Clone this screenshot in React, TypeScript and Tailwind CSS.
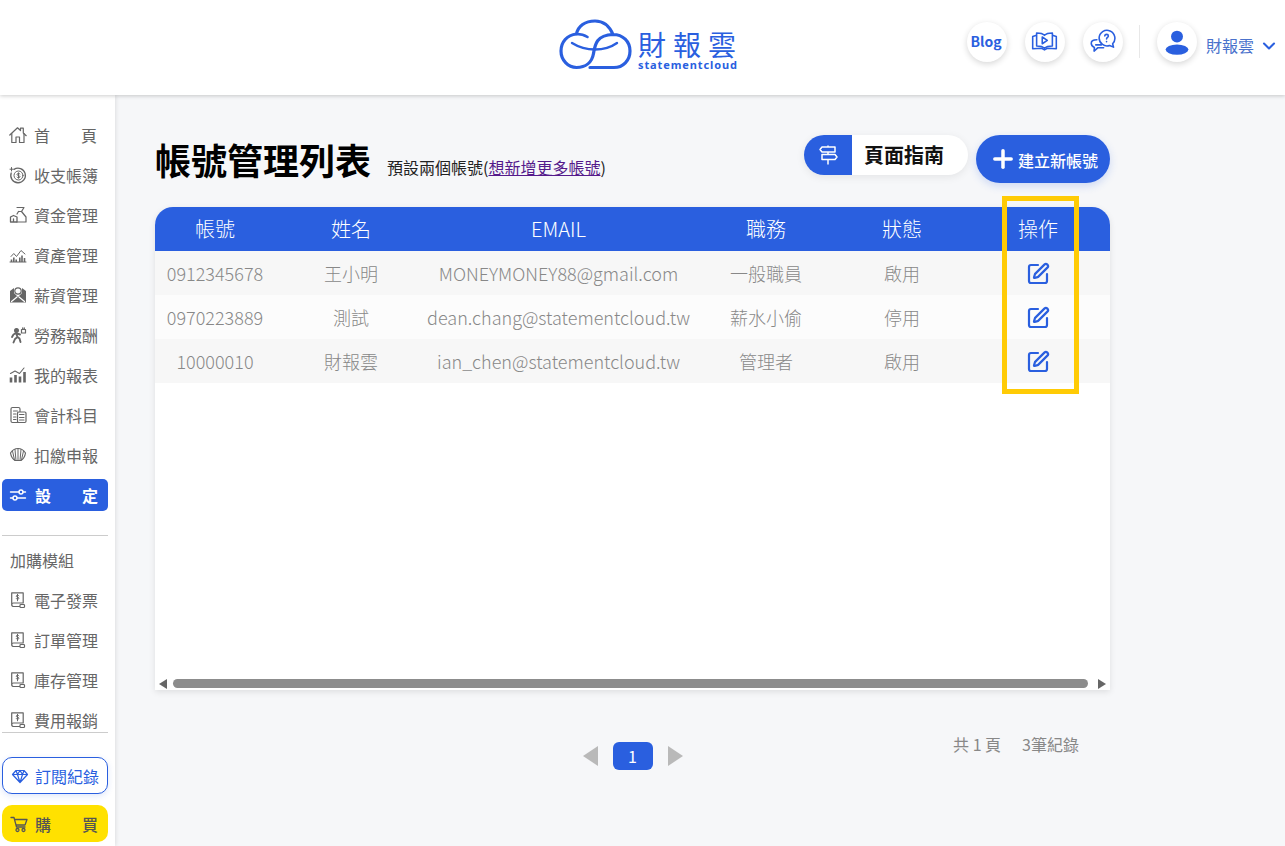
import React from 'react';
import { ChevronDown, Plus, SquarePen } from 'lucide-react';

const font = { fontFamily: '"Noto Sans CJK TC", "Noto Sans", sans-serif' };

const Ico = ({ children, cls = 'text-[#666]' }: { children: React.ReactNode; cls?: string }) => (
  <svg viewBox="0 0 18 18" className={`h-[18px] w-[18px] shrink-0 ${cls}`} fill="none" stroke="currentColor" strokeWidth="1.2" strokeLinecap="round" strokeLinejoin="round">
    {children}
  </svg>
);

const HomeIcon = () => (
  <Ico>
    <path d="M.8 9 8.500 1.800l3 2.700V2.200h2.800V7l2.900 2.700" />
    <path d="M2.800 7.500V16.500H7v-5.500h3.500v5.500H15V7.500" />
  </Ico>
);
const MoneyIcon = () => (
  <Ico>
    <path d="M5 3.400A7.300 7.300 0 1 1 2.200 7" strokeWidth="1.300" />
    <circle cx="9.500" cy="9.500" r="4.500" strokeWidth="1" />
    <path d="M11 8c-.5-.8-3-.9-3 .5s3 .8 3 2.200-2.500 1.300-3 .5M9.500 6.800v5.400M2.500 1.500v3.500M1 3.200h3" strokeWidth="1" />
  </Ico>
);
const BagIcon = () => (
  <Ico>
    <path d="M8 1.500h7l-2.500 4L17 11v5H8" />
    <path d="M9.500 5.500h3M8 8l1.500-2.500" />
    <path d="M1.500 16v-5l3-1.500L8 11v5zM4.500 16v-3" strokeWidth="1.300" />
  </Ico>
);
const AssetIcon = () => (
  <Ico>
    <path d="M1 16h16" strokeWidth="1" />
    <path d="M2.500 16v-2.500M4.800 16v-4.500M7.200 16v-2.500M10.800 16v-4.500M13 16V9.500M15.500 16v-4" strokeWidth="1.600" strokeLinecap="butt" />
    <path d="M2 10.500l2.800-3 2.700 3 4.500-6 4 3.500" strokeWidth="1" />
  </Ico>
);
const SalaryIcon = () => (
  <Ico>
    <path d="M1 5 5 2v5l4 4 4-4V2l4 3v11.500H1z" fill="currentColor" stroke="none" />
    <circle cx="9" cy="5" r="3.200" fill="#fff" stroke="currentColor" />
    <path d="M2.500 15.500l5.500-4.500M15.500 15.500l-5.500-4.500" stroke="#fff" />
  </Ico>
);
const WorkIcon = () => (
  <Ico>
    <circle cx="7.500" cy="4.500" r="1.900" fill="currentColor" />
    <path d="M7 7 4.500 8.500 3 11M7 7l1.500 4-2.500 2-1.500 3.500M8.500 11l2 1.500 1 3.500M8 7.500l3 1" strokeWidth="1.900" />
    <path d="M12.500 3.500h4v3.500h-4zM13.700 3.500V1.800M15.300 3.500V1.800" strokeWidth="1.200" />
  </Ico>
);
const ReportIcon = () => (
  <Ico>
    <path d="M2 16.500v-5M6.500 16.500V9M11 16.500v-6M15.500 16.500V6" strokeWidth="2.600" strokeLinecap="butt" />
    <path d="M1.500 7.500 6 5l4.500 2.500 4.500-5.500" strokeWidth="1.100" />
  </Ico>
);
const AccountIcon = () => (
  <Ico>
    <path d="M8.500 16.500H3.500A1.500 1.500 0 0 1 2 15V3a1.500 1.500 0 0 1 1.500-1.500h6A1.500 1.500 0 0 1 11 3v2.500" />
    <rect x="8.500" y="6" width="8.500" height="10.500" rx="1.200" />
    <path d="M4.500 5h4M4.500 8H7M4.500 11H7M4.500 13.500H7M10.500 8.500h4.500M10.500 11.500h4.500M10.500 14h4.500" strokeWidth="1.100" />
  </Ico>
);
const TaxIcon = () => (
  <Ico>
    <path d="M1.500 7c2.200-3.500 5-4.500 7.500-4.500s5.300 1 7.500 4.500c-.5 3-2.200 6-4.500 7.500H6C3.700 13 2 10 1.500 7z" />
    <path d="M6 3.500 7 14.500M9 2.500v12M12 3.500 11 14.500M3.500 5l2 9M14.500 5l-2 9" strokeWidth="1" />
  </Ico>
);
const ModuleIcon = () => (
  <Ico>
    <path d="M11 15.500H4.500A1.800 1.800 0 0 1 2.700 13.700V1.800h11.500V12H4.500a1.700 1.700 0 0 0 0 3.500" />
    <path d="M10 4.800c-.4-.8-2.800-.8-2.800.4s2.800.8 2.800 2-2.500 1.100-2.900.3M8.500 3.300v6.500" strokeWidth="1" />
    <rect x="11" y="13.500" width="4.500" height="3" rx=".8" fill="#fff" />
  </Ico>
);

const navItems = [
  { icon: <MoneyIcon />, label: '收支帳簿' },
  { icon: <BagIcon />, label: '資金管理' },
  { icon: <AssetIcon />, label: '資產管理' },
  { icon: <SalaryIcon />, label: '薪資管理' },
  { icon: <WorkIcon />, label: '勞務報酬' },
  { icon: <ReportIcon />, label: '我的報表' },
  { icon: <AccountIcon />, label: '會計科目' },
  { icon: <TaxIcon />, label: '扣繳申報' },
];

const addons = ['電子發票', '訂單管理', '庫存管理', '費用報銷'];

const rows = [
  { phone: '0912345678', name: '王小明', email: 'MONEYMONEY88@gmail.com', role: '一般職員', status: '啟用' },
  { phone: '0970223889', name: '測試', email: 'dean.chang@statementcloud.tw', role: '薪水小偷', status: '停用' },
  { phone: '10000010', name: '財報雲', email: 'ian_chen@statementcloud.tw', role: '管理者', status: '啟用' },
];

const NavRow = ({ icon, children }: { icon: React.ReactNode; children: React.ReactNode }) => (
  <div className="flex h-10 items-center gap-[7px] whitespace-nowrap pl-[9px] text-[16px] text-[#666]">
    {icon}
    {children}
  </div>
);

const Spread = ({ a, b }: { a: string; b: string }) => (
  <span className="flex w-[63px] justify-between">
    <span>{a}</span>
    <span>{b}</span>
  </span>
);

const Logo = () => (
  <div className="flex items-center gap-[6px]">
    <svg viewBox="0 0 73 52" className="mb-[5px] h-[52px] w-[73px]" fill="none" stroke="#2a5fdf" strokeWidth="3.200" strokeLinecap="round" strokeLinejoin="round">
      <path d="M31 48.500H55c9 0 16-7 16-16.500S64 15.500 54 15.500C50 6 44 2 36 2 26 2 19 7 17.500 15 8 16 2 23 2 32s7 16.500 15.500 16.500c9 0 15.500-5 17-14 1.500-9 3-18.500 19.500-19" />
      <path d="M13 24c8 5 15 6.500 23 6.500s15-1.500 22-6.500" strokeWidth="2.400" />
      <path d="M17.500 15c4 0 8 1 11 3" strokeWidth="2.600" />
    </svg>
    <div className="flex flex-col pt-[5px]">
      <span className="h-[30px] text-[28px] leading-[30px] tracking-[7px] text-[#2a5fdf]">財報雲</span>
      <span style={{ fontFamily: '"Noto Sans", sans-serif' }} className="text-[11px] font-bold leading-[12px] tracking-[0.900px] text-[#2a5fdf]">statementcloud</span>
    </div>
  </div>
);

const Round = ({ children }: { children: React.ReactNode }) => (
  <div className="flex h-10 w-10 items-center justify-center rounded-full bg-white shadow-[0_2px_6px_rgba(0,0,0,0.16)]">{children}</div>
);

export default function App() {
  return (
    <div style={font} className="flex h-[846px] w-[1285px] flex-col overflow-hidden bg-[#f6f7f9]">
      {/* header */}
      <header className="relative z-20 flex h-[95px] shrink-0 items-center bg-white pl-[559px] pr-[6px] shadow-[0_1px_4px_rgba(0,0,0,0.2)]">
        <Logo />
        <div className="ml-auto flex items-center pb-[12px]">
          <div className="flex gap-[18px]">
            <Round>
              <span className="pr-[2px] text-[14px] font-bold text-[#2a5fdf]">Blog</span>
            </Round>
            <Round>
              <svg viewBox="0 0 24 24" className="h-[27px] w-[27px]" fill="none" stroke="#2a5fdf" strokeWidth="1.400" strokeLinejoin="round">
                <path d="M5 6.500 1.500 7.500v11l8-.5 2.500 1.500 2.500-1.500 8 .5v-11l-3.500-1" />
                <path d="M5 4.500c3 0 5.500.5 7 2 1.500-1.500 4-2 7-2V16c-3 0-5.500.5-7 2-1.500-1.500-4-2-7-2z" />
                <path d="M10 8v6l4.500-3z" />
              </svg>
            </Round>
            <Round>
              <svg viewBox="0 0 24 24" className="h-[27px] w-[27px]" fill="none" stroke="#2a5fdf" strokeWidth="1.400" strokeLinejoin="round" strokeLinecap="round">
                <path d="M13 14.500H8l-3.500 3 .3-3.200C3 13.500 2 12 2 10.500 2 8.500 4 7.500 7 7.500" transform="translate(0 3)" />
                <path d="M9 9a7 7 0 1 1 12 5l.8 3-3.500-1.500A7 7 0 0 1 9 9z" />
                <path d="M14 7c.2-1.800 3.200-1.800 3.200 0 0 1.300-1.600 1.300-1.600 2.800M15.600 12v.2M6 15h5" />
              </svg>
            </Round>
          </div>
          <div className="ml-[16px] mr-[17px] h-[33px] w-px bg-[#e8e8e8]" />
          <Round>
            <svg viewBox="0 0 24 24" className="h-[26px] w-[26px]" fill="#2a5fdf">
              <circle cx="12" cy="7" r="5.500" />
              <ellipse cx="12" cy="19" rx="10.500" ry="4.800" />
            </svg>
          </Round>
          <span className="ml-[9px] pt-[7px] text-[16px] text-[#4a72cc]">財報雲</span>
          <ChevronDown className="ml-[5px] mt-[8px] h-[20px] w-[20px] text-[#2a5fdf]" strokeWidth={2.500} />
        </div>
      </header>

      <div className="flex min-h-0 flex-1">
        {/* sidebar */}
        <aside className="relative z-10 flex w-[115px] shrink-0 flex-col bg-white pt-[20px] shadow-[1px_0_4px_rgba(0,0,0,0.1)]">
          <NavRow icon={<HomeIcon />}>
            <Spread a="首" b="頁" />
          </NavRow>
          {navItems.map((n) => (
            <NavRow key={n.label} icon={n.icon}>
              {n.label}
            </NavRow>
          ))}
          <div className="mx-[2px] mt-[4px] flex h-8 w-[106px] items-center gap-[8px] rounded-[5px] bg-[#2a5fdf] pl-[7px] text-[16px] font-bold text-white">
            <Ico cls="text-white">
              <path d="M1.500 6h8.500M14 6h2.500M1.500 12H4M8 12h8.500" strokeWidth="1.400" />
              <circle cx="12" cy="6" r="2" strokeWidth="1.400" />
              <circle cx="6" cy="12" r="2" strokeWidth="1.400" />
            </Ico>
            <Spread a="設" b="定" />
          </div>
          <div className="mx-[2px] mt-[24px] h-px w-[106px] bg-[#ccc]" />
          <div className="h-[44px] pl-[10px] pt-[12px] text-[16px] leading-[24px] text-[#666]">加購模組</div>
          {addons.map((a) => (
            <NavRow key={a} icon={<ModuleIcon />}>
              {a}
            </NavRow>
          ))}
          <div className="mx-[2px] -mt-[8px] h-px w-[106px] bg-[#ccc]" />
          <div className="mx-[2px] mt-[24px] flex h-[37px] w-[106px] items-center gap-[6px] rounded-[10px] border border-[#2a5fdf] bg-white pl-[8px] text-[16px] text-[#2a5fdf] shadow-[0_2px_6px_rgba(42,95,223,0.15)]">
            <svg viewBox="0 0 18 18" className="h-[18px] w-[18px] shrink-0" fill="none" stroke="#2a5fdf" strokeWidth="1.200" strokeLinejoin="round">
              <path d="M5 3.500h8l3.500 4L9 15.500 1.500 7.500zM1.500 7.500h15M5 3.500l1.500 4L9 15.500l2.500-8 1.500-4M6.500 7.500 9 3.500l2.500 4" />
            </svg>
            <span className="whitespace-nowrap">訂閱紀錄</span>
          </div>
          <div className="mx-[2px] mt-[11px] flex h-[37px] w-[106px] items-center gap-[7px] rounded-[10px] bg-[#ffe100] pl-[8px] text-[16px] font-medium text-[#555]">
            <svg viewBox="0 0 18 18" className="h-[18px] w-[18px] shrink-0" fill="none" stroke="#555" strokeWidth="1.300" strokeLinecap="round" strokeLinejoin="round">
              <path d="M1 2.500h3l2.500 9.500h8.500M4.500 4.500H17l-2 5.500H6" />
              <circle cx="7.500" cy="15" r="1.500" />
              <circle cx="13.500" cy="15" r="1.500" />
            </svg>
            <Spread a="購" b="買" />
          </div>
        </aside>

        {/* main */}
        <main className="w-[995px] pl-[40px] pt-[40px]">
          <div className="flex h-[72px] w-[955px] items-start">
            <h1 className="text-[36px] font-bold leading-[48px] text-black">帳號管理列表</h1>
            <p className="ml-[16px] mt-[19px] text-[16px] leading-[26px] text-[#222]">
              預設兩個帳號(<a className="text-[#551a8b] underline">想新增更多帳號</a>)
            </p>
            <div className="ml-auto flex h-10 w-[164px] overflow-hidden rounded-full bg-white shadow-[0_2px_8px_rgba(0,0,0,0.08)]">
              <div className="flex w-[48px] items-center justify-center bg-[#2a5fdf]">
                <svg viewBox="0 0 22 22" className="h-[22px] w-[22px]" fill="none" stroke="#fff" strokeWidth="1.500" strokeLinejoin="round">
                  <path d="M5 3h13v5H5L3 5.500zM18 10.500H5v5h13l2-2.500zM11 1.500V3M11 8v2.500M11 15.500v5" />
                </svg>
              </div>
              <span className="flex-1 pr-[12px] text-center text-[20px] font-bold leading-[40px] text-[#111]">頁面指南</span>
            </div>
            <div className="ml-[8px] flex h-[48px] w-[134px] items-center rounded-full bg-[#2a5fdf] pl-[13px] text-[16px] font-medium text-white shadow-[0_3px_8px_rgba(42,95,223,0.2)]">
              <Plus className="h-[28px] w-[28px] shrink-0" strokeWidth={3} />
              <span className="whitespace-nowrap pl-[1px] pt-[2px]">建立新帳號</span>
            </div>
          </div>

          {/* table */}
          <div className="relative h-[483px] w-[955px] rounded-t-[18px] bg-white shadow-[0_2px_6px_rgba(0,0,0,0.1)]">
            <div className="flex h-full flex-col overflow-hidden rounded-t-[18px]">
              <div className="grid h-[44px] w-[959px] shrink-0 grid-cols-[120px_152px_263px_152px_120px_152px] items-center bg-[#2a5fdf] text-center text-[20px] font-light text-white">
                <span>帳號</span>
                <span>姓名</span>
                <span>EMAIL</span>
                <span>職務</span>
                <span>狀態</span>
                <span>操作</span>
              </div>
              {rows.map((r, i) => (
                <div key={r.phone} className={`grid h-[44px] w-[959px] shrink-0 grid-cols-[120px_152px_263px_152px_120px_152px] items-center text-center text-[18px] font-light text-[#888] ${i % 2 === 0 ? 'bg-[#f7f7f7]' : 'bg-[#fcfcfc]'}`}>
                  <span>{r.phone}</span>
                  <span>{r.name}</span>
                  <span className="whitespace-nowrap">{r.email}</span>
                  <span>{r.role}</span>
                  <span>{r.status}</span>
                  <span className="flex justify-center pt-[1px]">
                    <SquarePen className="h-[24px] w-[24px] text-[#2a5fdf]" strokeWidth={2.200} />
                  </span>
                </div>
              ))}
              {/* horizontal scrollbar */}
              <div className="mt-auto flex h-[13px] items-center pl-[4px] pr-[4px]">
                <span className="h-0 w-0 border-y-[5px] border-r-[8px] border-y-transparent border-r-[#666]" />
                <div className="ml-[6px] h-[9px] flex-1 rounded-full bg-[#8c8c8c]" />
                <span className="ml-[10px] h-0 w-0 border-y-[5px] border-l-[8px] border-y-transparent border-l-[#666]" />
              </div>
            </div>
            {/* highlight overlay */}
            <div className="pointer-events-none absolute -top-[11px] left-[847px] h-[198px] w-[77px] border-[5px] border-[#ffcb05]" />
          </div>

          {/* pagination */}
          <div className="mt-[52px] grid w-[955px] grid-cols-[1fr_auto_1fr]">
            <div />
            <div className="flex items-center gap-[15px]">
              <span className="h-0 w-0 border-y-[10px] border-r-[15px] border-y-transparent border-r-[#b9b9b9]" />
              <span className="flex h-[28px] w-[40px] items-center justify-center rounded-[6px] bg-[#2a5fdf] text-[16px] text-white">1</span>
              <span className="h-0 w-0 border-y-[10px] border-l-[15px] border-y-transparent border-l-[#b9b9b9]" />
            </div>
            <div className="-mt-[10px] flex justify-end gap-[21px] pr-[31px] text-[16px] leading-[24px] text-[#888]">
              <span className="whitespace-pre">共 1 頁</span>
              <span>3筆紀錄</span>
            </div>
          </div>
        </main>
      </div>
    </div>
  );
}
